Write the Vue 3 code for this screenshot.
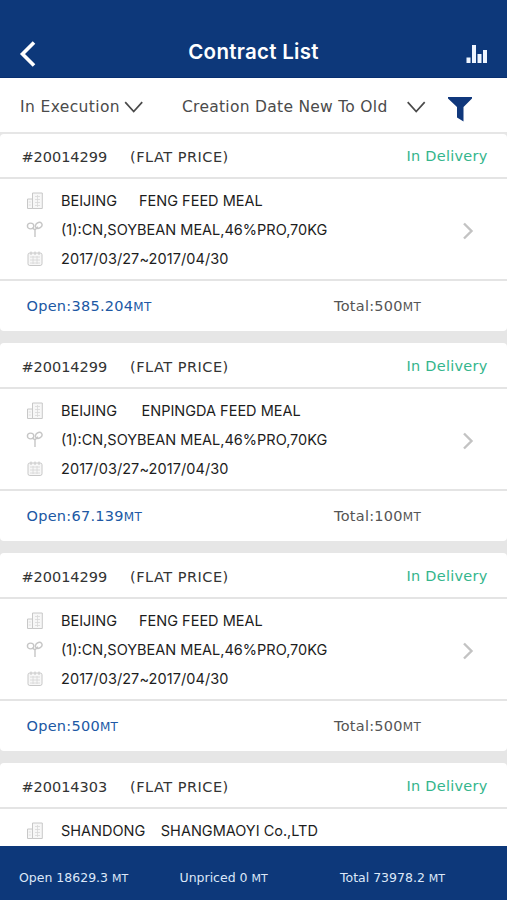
<script setup>
const goods = '(1):CN,SOYBEAN MEAL,46%PRO,70KG'
const date = '2017/03/27~2017/04/30'
const cards = [
  { id: '#20014299', city: 'BEIJING', gap: 22, company: 'FENG FEED MEAL', goods, date, open: '385.204', total: '500' },
  { id: '#20014299', city: 'BEIJING', gap: 24.5, company: 'ENPINGDA FEED MEAL', goods, date, open: '67.139', total: '100' },
  { id: '#20014299', city: 'BEIJING', gap: 22, company: 'FENG FEED MEAL', goods, date, open: '500', total: '500' },
  { id: '#20014303', city: 'SHANDONG', gap: 15.5, company: 'SHANGMAOYI Co.,LTD' },
]
</script>

<template>
  <div class="screen">
    <header class="header">
      <svg class="back" width="18" height="28" viewBox="0 0 18 28"><path d="M15 2.5 3.5 14 15 25.5" fill="none" stroke="#fff" stroke-width="3.6" /></svg>
      <h1>Contract List</h1>
      <svg class="chart" width="22" height="20" viewBox="0 0 22 20" fill="#eef5ff"><path d="M.5 13.5h4V19h-4zM6 1h4v18H6zM11.5 10h4v9h-4zM17 6h4v13h-4z" /></svg>
    </header>
    <div class="filters">
      <span class="f1">In Execution</span>
      <svg class="chev" width="20" height="14" viewBox="0 0 20 14"><path d="M1.2 2.1 9.7 11.5l8.5-9.4" /></svg>
      <span class="f2">Creation Date New To Old</span>
      <svg class="chev" width="20" height="14" viewBox="0 0 20 14"><path d="M.7 2.1 9.2 11.5l8.5-9.4" /></svg>
      <svg class="funnel" width="24" height="25" viewBox="0 0 24 25"><path d="M0 0h24v1.5L15.5 10v14.5L9 20.5V10L0 1.5z" fill="#10387c" /></svg>
    </div>
    <main class="list">
      <section v-for="(c, i) in cards" :key="i" class="card">
        <div class="head">
          <span class="id">{{ c.id }}</span>
          <span class="price">(FLAT PRICE)</span>
          <span class="status">In Delivery</span>
        </div>
        <div class="body" :class="{ short: !c.goods }">
          <div class="rows">
            <div class="row">
              <svg width="18" height="18" viewBox="0 0 18 18"><path d="M6.5 1h9.8v15.5H6.5zM1.5 7h5v9.5h-5z" fill="#f7f7f7" stroke="#c8c8c8" /><path d="M9 4.5h5M9 7.5h5M9 10.5h5M9 13.5h5M2.8 10h2M2.8 13h2M11.5 3v12" stroke="#d8d8d8" stroke-width=".8" /></svg>
              <span class="txt">{{ c.city }}</span><span class="txt" :style="{ marginLeft: c.gap + 'px' }">{{ c.company }}</span>
            </div>
            <div v-if="c.goods" class="row">
              <svg width="18" height="18" viewBox="0 0 18 18" fill="none" stroke="#c6c6c6" stroke-width="1.4"><ellipse cx="4.6" cy="5" rx="3.2" ry="2.9" /><ellipse cx="12.7" cy="4.4" rx="3.5" ry="2.7" transform="rotate(-35 12.7 4.4)" /><path d="M6.5 7.2 9 8.8l3-3M9 8.5v7.5" /></svg>
              <span class="txt">{{ c.goods }}</span>
            </div>
            <div v-if="c.date" class="row">
              <svg width="18" height="18" viewBox="0 0 18 18"><rect x="2" y="3" width="14" height="12.5" rx="1.8" fill="#f7f7f7" stroke="#c8c8c8" /><path d="M5 1.5v3.5M9 1.5v3.5M13 1.5v3.5" stroke="#c8c8c8" /><path d="M4 7h10M4 10h10M4 13h10M7 6v8M11 6v8" stroke="#d6d6d6" stroke-width=".8" /></svg>
              <span class="txt date">{{ c.date }}</span>
            </div>
          </div>
          <svg v-if="c.goods" class="arrow" width="12" height="18" viewBox="0 0 12 18"><path d="m2 1.5 7.5 7.5L2 16.5" fill="none" stroke="#c3c3c3" stroke-width="2.4" /></svg>
        </div>
        <div v-if="c.open" class="foot">
          <span class="open">Open:{{ c.open }}<small>MT</small></span>
          <span class="total">Total:{{ c.total }}<small>MT</small></span>
        </div>
      </section>
    </main>
    <footer class="summary">
      <span>Open 18629.3 <small>MT</small></span>
      <span>Unpriced 0 <small>MT</small></span>
      <span>Total 73978.2 <small>MT</small></span>
    </footer>
  </div>
</template>

<style>
body { margin: 0; }
</style>
<style scoped>
.screen { width: 507px; height: 900px; display: flex; flex-direction: column; overflow: hidden; background: #e6e6e6; font-family: "DejaVu Sans", sans-serif; white-space: nowrap; }
.header { height: 78px; flex: none; box-sizing: border-box; padding: 27px 19px 0 19px; background: #0d387a; border-bottom: 1px solid #082f70; display: grid; grid-template-columns: 60px 1fr 60px; align-items: center; }
.header h1 { margin: 0; text-align: center; font: 600 20.5px/28px Inter, sans-serif; letter-spacing: .28px; color: #fff; }
.back { margin-top: 4px; }
.chart { justify-self: end; margin-top: 4px; }
.filters { height: 54px; flex: none; background: #fff; display: flex; align-items: center; font-size: 15.5px; color: #4b4b4b; padding-left: 20px; padding-top: 3px; box-sizing: border-box; }
.f1 { width: 104px; letter-spacing: .38px; }
.f2 { width: 225px; margin-left: 38px; letter-spacing: .28px; }
.chev { fill: none; stroke: #4a4a4a; stroke-width: 1.7; margin-top: 1px; }
.funnel { margin-left: 21px; margin-top: 5px; }
.list { flex: 1; min-height: 0; display: flex; flex-direction: column; gap: 12px; padding-top: 2px; }
.card { height: 198px; flex: none; background: #fff; border-radius: 4px; display: flex; flex-direction: column; }
.card:first-child { height: 197px; }
.card:last-child { height: 83px; border-radius: 4px 4px 0 0; }
.head { height: 46px; flex: none; box-sizing: border-box; border-bottom: 2px solid #e4e4e4; display: flex; align-items: center; font-size: 14.5px; color: #333; padding: 4px 19.5px 0 21.5px; }
.card:first-child .head { height: 45px; padding-top: 3px; }
.id { width: 108.5px; letter-spacing: -.04px; }
.price { letter-spacing: .5px; }
.status { margin-left: auto; color: #34b58c; margin-top: -2px; letter-spacing: .25px; }
.body { height: 102px; flex: none; box-sizing: border-box; border-bottom: 2px solid #e4e4e4; display: flex; align-items: center; padding: 0 33px 0 26px; justify-content: space-between; }
.body.short { height: 37px; border: 0; padding-top: 5px; }
.rows { display: flex; flex-direction: column; padding-top: 2px; }
.row { height: 29.4px; display: flex; align-items: center; }
.txt { font: 14.5px/20px Inter, sans-serif; color: #1d1d1d; }
.row svg + .txt { margin-left: 17px; }
.date { letter-spacing: .07px; }
.arrow { margin-top: 4px; }
.foot { flex: 1; display: flex; align-items: center; font-size: 14.5px; padding-left: 26.5px; letter-spacing: .27px; }
.open { width: 307.5px; color: #2058a4; }
.total { color: #555; }
.foot small { font-size: 12px; }
.summary { height: 54px; flex: none; box-sizing: border-box; background: #0d387a; color: #dce7f8; font-size: 12.5px; display: grid; grid-template-columns: 160.5px 160.5px 1fr; align-items: center; padding: 8px 0 0 19px; }
.summary small { font-size: 11px; }
</style>
